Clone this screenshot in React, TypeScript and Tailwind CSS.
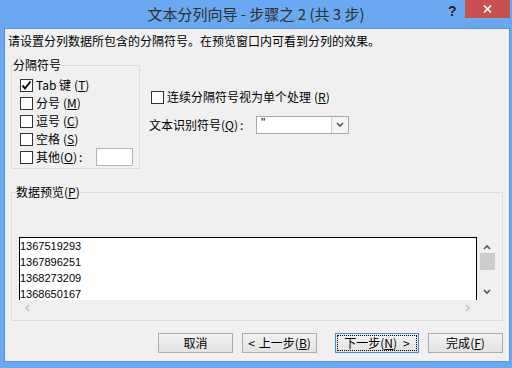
import React from 'react';

const cjk = "font-['Noto_Sans_CJK_SC','Noto_Sans',sans-serif]";

function Key({ k }: { k: string }) {
  return (
    <span>
      (<span className="underline underline-offset-1">{k}</span>)
    </span>
  );
}

function Box({ checked = false }: { checked?: boolean }) {
  return (
    <span className="w-[13px] h-[13px] border border-[#333] bg-white flex items-center justify-center shrink-0">
      {checked && (
        <svg width="11" height="11" viewBox="0 0 11 11">
          <path d="M1.5 5.5 L4 8.5 L9.5 1.5" fill="none" stroke="#111" strokeWidth="2" />
        </svg>
      )}
    </span>
  );
}

function Chevron({ dir, color }: { dir: 'up' | 'down' | 'left' | 'right'; color: string }) {
  const d = {
    up: 'M1 5 L4 2 L7 5',
    down: 'M1 2 L4 5 L7 2',
    left: 'M5 1 L2 4 L5 7',
    right: 'M2 1 L5 4 L2 7',
  }[dir];
  return (
    <svg width="8" height="8" viewBox="0 0 8 8">
      <path d={d} fill="none" stroke={color} strokeWidth="1.6" />
    </svg>
  );
}

function Button({ children, focused = false, w }: { children: React.ReactNode; focused?: boolean; w: string }) {
  return (
    <div
      className={`${w} h-[20px] border ${
        focused ? 'border-[#3c8ce6]' : 'border-[#acacac]'
      } bg-gradient-to-b from-[#f2f2f2] to-[#e3e3e3] flex items-center justify-center p-[2px]`}
    >
      <div
        className={`w-full h-full flex items-center justify-center text-[12px] leading-none whitespace-nowrap ${
          focused ? 'outline-1 outline-dotted outline-black' : ''
        }`}
      >
        {children}
      </div>
    </div>
  );
}

const rows = [
  { label: <><span>Tab 键</span><Key k="T" /></>, checked: true },
  { label: <><span>分号</span><Key k="M" /></>, checked: false },
  { label: <><span>逗号</span><Key k="C" /></>, checked: false },
  { label: <><span>空格</span><Key k="S" /></>, checked: false },
];

const numbers = ['1367519293', '1367896251', '1368273209', '1368650167'];

export default function App() {
  return (
    <div className={`w-[512px] h-[368px] bg-[#6aa9f1] flex flex-col text-black ${cjk}`}>
      {/* title bar */}
      <div className="h-[28px] relative flex items-center justify-center">
        <span className="text-[15px] text-[#2e2e2e] leading-none pb-[2px]">文本分列向导 - 步骤之 2 (共 3 步)</span>
        <span className="absolute left-[448px] top-[1px] text-[14px] font-bold text-[#222] font-['Liberation_Sans',sans-serif]">?</span>
        <div className="absolute left-[465px] top-0 w-[45px] h-[18px] bg-[#c75050] flex items-center justify-center">
          <svg width="9" height="8" viewBox="0 0 9 8">
            <path d="M1 0.5 L8 7.5 M8 0.5 L1 7.5" stroke="#fff" strokeWidth="1.6" />
          </svg>
        </div>
      </div>

      {/* client area */}
      <div className="ml-[4px] w-[506px] h-[334px] border border-[#5a90d6] bg-[#f0f0f0] flex flex-col">
        <p className="mt-[4px] ml-[3px] h-[16px] leading-[16px] text-[12px] whitespace-nowrap">
          请设置分列数据所包含的分隔符号。在预览窗口内可看到分列的效果。
        </p>

        <div className="flex mt-[8px]">
          <fieldset className="ml-[6px] w-[129px] border border-[#dcdcdc] p-0 m-0">
            <legend className="ml-[1px] px-0 h-[16px] leading-[16px] text-[12px]">分隔符号</legend>
            <div className="pl-[8px] pt-[3px] pb-[2px] flex flex-col">
              {rows.map((r, i) => (
                <div key={i} className="h-[18px] flex items-center gap-[3px] text-[12px] leading-none whitespace-nowrap">
                  <Box checked={r.checked} />
                  {r.label}
                </div>
              ))}
              <div className="h-[18px] flex items-center text-[12px] leading-none whitespace-nowrap">
                <Box />
                <span className="ml-[3px] whitespace-nowrap">
                  其他<Key k="O" /><span className="ml-[2px]">:</span>
                </span>
                <div className="ml-auto mr-[6px] w-[37px] h-[18px] bg-white border border-[#b5b5b5] shrink-0" />
              </div>
            </div>
          </fieldset>

          <div className="ml-[9px] flex flex-col">
            <div className="mt-[31px] h-[18px] flex items-center gap-[3px] ml-[2px] text-[12px] leading-none whitespace-nowrap">
              <Box />
              <span>连续分隔符号视为单个处理</span>
              <Key k="R" />
            </div>
            <div className="mt-[9px] h-[19px] flex items-center text-[12px] leading-none whitespace-nowrap">
              <span className="w-[107px] flex">
                <span>文本识别符号</span>
                <Key k="Q" />
                <span className="ml-[2px]">:</span>
              </span>
              <div className="w-[93px] h-[18px] bg-white border border-[#a9a9a9] flex">
                <span className="flex-1 pl-[4px] text-[12px] leading-[12px] font-['Liberation_Sans',sans-serif]">"</span>
                <div className="w-[17px] border-l border-[#d0d0d0] bg-[#f4f4f4] flex items-center justify-center">
                  <Chevron dir="down" color="#555" />
                </div>
              </div>
            </div>
          </div>
        </div>

        <fieldset className="ml-[6px] mt-[15px] w-[492px] border border-[#dcdcdc] p-0 m-0">
          <legend className="ml-[4px] px-0 h-[16px] leading-[16px] text-[12px]">
            数据预览<Key k="P" />
          </legend>
          <div className="pl-[7px] pt-[37px] pb-[4px] flex flex-col">
            <div className="flex">
              <div className="w-[458px] h-[63px] border-t border-l border-r border-black bg-white flex flex-col overflow-hidden">
                {numbers.map((n) => (
                  <div key={n} className="h-[16px] leading-[16px] text-[11px] font-['Liberation_Sans',sans-serif]">
                    {n}
                  </div>
                ))}
              </div>
              <div className="w-[18px] h-[63px] flex flex-col items-center">
                <div className="h-[15px] flex items-end justify-center ml-[1px]">
                  <Chevron dir="up" color="#555" />
                </div>
                <div className="mt-[1px] ml-[2px] w-[15px] h-[17px] bg-[#cdcdcd]" />
                <div className="flex-1 flex items-end justify-center ml-[1px] pb-[4px]">
                  <Chevron dir="down" color="#555" />
                </div>
              </div>
            </div>
            <div className="h-[16px] w-[458px] flex items-center justify-between px-[5px]">
              <Chevron dir="left" color="#c4c4c4" />
              <Chevron dir="right" color="#c4c4c4" />
            </div>
          </div>
        </fieldset>

        <div className="flex mt-[12px] ml-[153px]">
          <Button w="w-[75px]">取消</Button>
          <div className="ml-[9px]">
            <Button w="w-[75px]">
              <span className="mr-[4px]">&lt;</span>上一步<Key k="B" />
            </Button>
          </div>
          <div className="ml-[18px]">
            <Button w="w-[84px]" focused>
              下一步<Key k="N" />
              <span className="ml-[6px]">&gt;</span>
            </Button>
          </div>
          <div className="ml-[9px]">
            <Button w="w-[75px]">
              完成<Key k="F" />
            </Button>
          </div>
        </div>
      </div>
    </div>
  );
}
